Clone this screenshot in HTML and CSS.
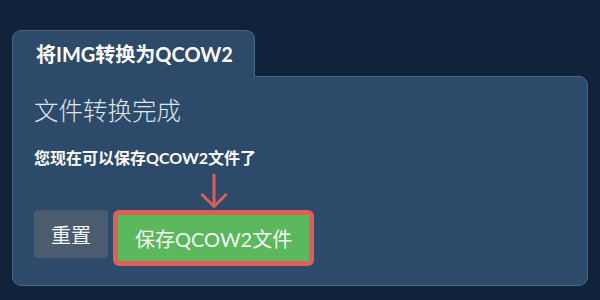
FILE: index.html
```html
<!DOCTYPE html>
<html lang="zh-CN">
<head>
    <meta charset="UTF-8">
    <meta name="viewport" content="width=device-width, initial-scale=1.0">
    <title>将IMG转换为QCOW2</title>
    <link rel="stylesheet" href="styles.css">
</head>
<body>
    <div class="converter">
        <div class="tab">将IMG转换为QCOW2</div>
        <div class="panel">
            <h2 class="status">文件转换完成</h2>
            <p class="hint">您现在可以保存QCOW2文件了</p>
            <div class="actions">
                <div class="arrow">
                    <svg width="28" height="36" viewBox="0 0 28 36">
                        <line x1="14" y1="1" x2="14" y2="33" stroke="#dc5f58" stroke-width="3"/>
                        <polyline points="1.5,21 14,33.5 26.5,21" fill="none" stroke="#dc5f58" stroke-width="3"/>
                    </svg>
                </div>
                <button class="btn btn-reset">重置</button>
                <button class="btn btn-save">保存QCOW2文件</button>
            </div>
        </div>
    </div>
</body>
</html>
```

FILE: styles.css
```css
body {
    margin: 0;
    padding: 30px 12px 13px;
    background-color: #11233a;
    font-family: Lato, "Noto Sans CJK SC", sans-serif;
    color: #ffffff;
}
.converter {
    display: flex;
    flex-direction: column;
    align-items: flex-start;
}
.tab {
    position: relative;
    z-index: 1;
    margin-bottom: -1px;
    padding: 0 21px 0 23px;
    line-height: 46px;
    font-size: 20px;
    font-weight: 700;
    background-color: #2d4a6a;
    border: 1px solid #4a6586;
    border-bottom: none;
    border-radius: 9px 9px 0 0;
}
.panel {
    align-self: stretch;
    padding: 18px 21px 19px;
    background-color: #2d4a6a;
    border: 1px solid #4a6586;
    border-radius: 0 9px 9px 9px;
}
.status {
    margin: 0;
    font-size: 24.5px;
    line-height: 32px;
    font-weight: 300;
    color: #dfe5ec;
}
.hint {
    margin: 20px 0 0;
    font-size: 16px;
    line-height: 22px;
    font-weight: 700;
}
.actions {
    display: grid;
    grid-template-columns: auto auto;
    justify-content: start;
    align-items: start;
    column-gap: 5px;
    margin-top: 4px;
}
.arrow {
    grid-column: 2;
    display: flex;
    justify-content: center;
    height: 37px;
}
.btn {
    height: 48px;
    padding: 0 17px;
    border: none;
    border-radius: 4px;
    font-family: Lato, "Noto Sans CJK SC", sans-serif;
    font-size: 20px;
    color: #f4f6f8;
    cursor: pointer;
}
.btn-reset {
    grid-column: 1;
    background-color: #4b5c6e;
}
.btn-save {
    grid-column: 2;
    height: 56px;
    padding: 0 17px;
    background-color: #5cb85c;
    border: 5px solid #dc5f58;
    border-radius: 6px;
}
```
